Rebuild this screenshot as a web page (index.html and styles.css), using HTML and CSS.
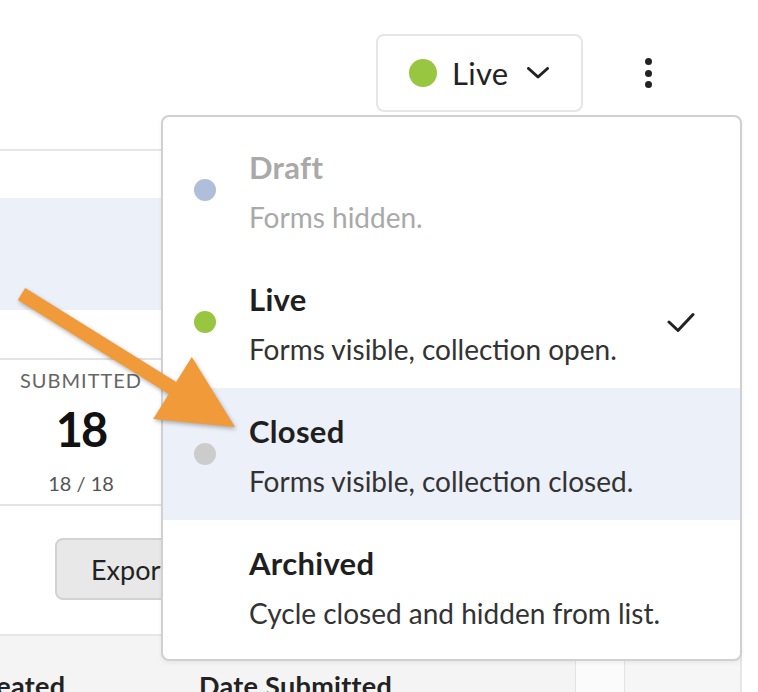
FILE: index.html
```html
<!DOCTYPE html>
<html lang="en">
<head>
<meta charset="utf-8">
<title>Cycle status</title>
<link rel="stylesheet" href="styles.css">
</head>
<body>
<div class="page">
  <header class="topbar">
    <button class="status-btn" type="button">
      <span class="dot dot-live dot-lg"></span>
      <span class="status-label">Live</span>
      <svg class="chevron" width="22" height="12" viewBox="0 0 22 12"><polyline points="1.5,1.5 11,10 20.5,1.5" fill="none" stroke="#222" stroke-width="3" stroke-linecap="round" stroke-linejoin="round"/></svg>
    </button>
    <div class="kebab"><span></span><span></span><span></span></div>
  </header>

  <section class="panel">
    <div class="panel-gap"></div>
    <div class="band"></div>
    <div class="panel-gap2"></div>
    <div class="stats">
      <div class="stat">
        <div class="stat-label">SUBMITTED</div>
        <div class="stat-value">18</div>
        <div class="stat-sub">18 / 18</div>
      </div>
    </div>
    <div class="actions">
      <button class="export-btn" type="button">Export CSV</button>
    </div>
    <div class="thead">
      <div class="th th-created"><span>Date Created</span></div>
      <div class="th th-submitted">Date Submitted</div>
      <div class="th th-narrow"></div>
      <div class="th th-rest"></div>
    </div>
  </section>

  <div class="menu">
    <div class="item item-muted">
      <span class="dot dot-draft"></span>
      <div class="item-text">
        <div class="item-title">Draft</div>
        <div class="item-desc">Forms hidden.</div>
      </div>
    </div>
    <div class="item">
      <span class="dot dot-live"></span>
      <div class="item-text">
        <div class="item-title">Live</div>
        <div class="item-desc">Forms visible, collection open.</div>
      </div>
      <svg class="check" width="28" height="20" viewBox="0 0 28 20"><polyline points="2,10 11,18.5 26,2.5" fill="none" stroke="#222" stroke-width="3" stroke-linecap="round" stroke-linejoin="round"/></svg>
    </div>
    <div class="item item-active">
      <span class="dot dot-closed"></span>
      <div class="item-text">
        <div class="item-title">Closed</div>
        <div class="item-desc">Forms visible, collection closed.</div>
      </div>
    </div>
    <div class="item">
      <span class="dot dot-none"></span>
      <div class="item-text">
        <div class="item-title">Archived</div>
        <div class="item-desc">Cycle closed and hidden from list.</div>
      </div>
    </div>
  </div>

  <svg class="arrow" width="758" height="692" viewBox="0 0 758 692">
    <polygon points="25.2,288.1 176.2,382.1 191.8,356.9 235,427 153.2,419.1 168.8,393.9 17.8,299.9" fill="#f09a3a"/>
  </svg>
</div>
</body>
</html>
```

FILE: styles.css
```css
* { box-sizing: border-box; }
html, body { margin: 0; padding: 0; background: #fff; }
body {
  font-family: "Lato", "Liberation Sans", sans-serif;
  color: #222;
  width: 758px;
  height: 692px;
  overflow: hidden;
}
.page { position: relative; width: 758px; height: 692px; overflow: hidden; }

/* top bar */
.topbar {
  height: 149px;
  display: flex;
  justify-content: flex-end;
  align-items: flex-start;
  padding: 34px 98px 0 0;
  gap: 53px;
}
.status-btn {
  height: 78px;
  width: 207px;
  display: flex;
  align-items: center;
  gap: 15px;
  padding: 0 0 0 31px;
  border: 2px solid #e6e6e6;
  border-radius: 8px;
  background: #fff;
  font-family: inherit;
  cursor: pointer;
}
.status-label { font-size: 31px; letter-spacing: 0.3px; color: #222; margin-right: 3px; }
.chevron { display: block; }
.kebab {
  width: 24px;
  height: 78px;
  display: flex;
  flex-direction: column;
  align-items: center;
  justify-content: center;
  gap: 4.5px;
}
.kebab span { width: 7px; height: 7px; border-radius: 50%; background: #222; }

.dot { width: 22px; height: 22px; border-radius: 50%; flex: 0 0 22px; display: block; }
.dot-lg { width: 28px; height: 28px; flex-basis: 28px; }
.dot-live { background: #98c640; }
.dot-draft { background: #aebedb; }
.dot-closed { background: #cccccc; }
.dot-none { background: transparent; }

/* background panel */
.panel {
  width: 742px;
  border-top: 2px solid #e6e6e6;
  border-right: 2px solid #e6e6e6;
}
.panel-gap { height: 47px; }
.band { height: 112px; background: #ecf0f8; }
.panel-gap2 { height: 48px; }
.stats {
  height: 148px;
  border-top: 2px solid #e3e3e3;
  border-bottom: 2px solid #e3e3e3;
  display: flex;
}
.stat { width: 162px; text-align: center; padding: 8px 0; }
.stat-label { font-size: 20px; line-height: 24px; letter-spacing: 1px; color: #666; }
.stat-value { font-size: 47px; line-height: 50px; margin-top: 12px; font-weight: 700; letter-spacing: -2px; color: #111; }
.stat-sub { font-size: 20px; line-height: 26px; margin-top: 16px; color: #555; }
.actions { height: 128px; padding: 32px 0 0 55px; }
.export-btn {
  height: 62px;
  width: 200px;
  padding: 0 0 0 34px;
  text-align: left;
  font-family: inherit;
  font-size: 27px;
  color: #222;
  background: #e8e8e8;
  border: 2px solid #d2d2d2;
  border-radius: 8px;
}
.thead {
  border-top: 2px solid #e6e6e6;
  display: flex;
  height: 60px;
}
.th { font-size: 27px; font-weight: 700; letter-spacing: 0.3px; color: #222; line-height: 30px; padding-top: 35px; white-space: nowrap; }
.th-created { width: 199px; background: #f4f4f4; overflow: visible; }
.th-created span { display: inline-block; margin-left: -98px; }
.th-submitted { width: 376px; background: #f4f4f4; }
.th-narrow { width: 49px; background: #fbfbfb; border-left: 1px solid #e3e3e3; }
.th-rest { flex: 1; background: #f6f6f6; border-left: 1px solid #e3e3e3; }

/* dropdown menu */
.menu {
  position: absolute;
  left: 161px;
  top: 115px;
  width: 581px;
  height: 546px;
  padding: 7px 0;
  background: #fff;
  border: 2px solid #d0d0d0;
  border-radius: 8px;
  box-shadow: 0 2px 4px rgba(0, 0, 0, 0.06);
  z-index: 5;
}
.item {
  height: 132px;
  display: flex;
  align-items: center;
  padding: 0 47px 0 31px;
}
.item-active { background: #ecf0f8; }
.item .dot { margin-right: 33px; }
.item-text { flex: 1; padding-top: 4px; }
.item-title { font-size: 31px; line-height: 36px; font-weight: 700; letter-spacing: 0.3px; color: #1f1f1f; }
.item-desc { font-size: 28px; line-height: 36px; margin-top: 14px; color: #333; }
.item-muted .item-title { color: #a9a9a9; }
.item-muted .item-desc { color: #a9a9a9; }
.check { display: block; margin-right: -2px; }

/* annotation arrow */
.arrow {
  position: absolute;
  left: 0;
  top: 0;
  z-index: 10;
  pointer-events: none;
  filter: drop-shadow(1px 2px 2px rgba(0, 0, 0, 0.3));
}
```
